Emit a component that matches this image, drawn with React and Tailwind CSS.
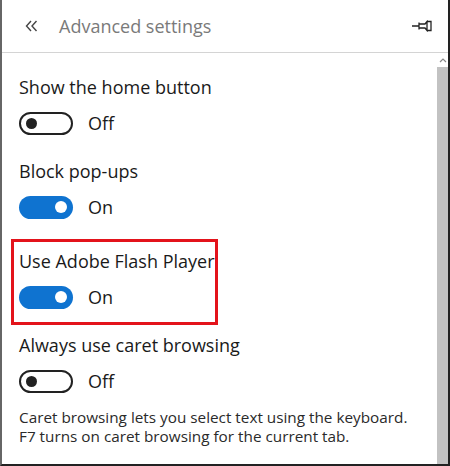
import React from "react";

function Toggle({ on }) {
  if (on) {
    return (
      <div className="w-[54px] h-[23px] rounded-full bg-[#0f73d0] flex items-center justify-end pr-[6px]">
        <div className="w-[12px] h-[12px] rounded-full bg-white" />
      </div>
    );
  }
  return (
    <div className="w-[54px] h-[23px] rounded-full border-[2px] border-[#222] flex items-center pl-[5px]">
      <div className="w-[11px] h-[11px] rounded-full bg-[#222]" />
    </div>
  );
}

function Setting({ label, on, className = "" }) {
  return (
    <div className={className}>
      <div className="text-[18px] leading-[24px] text-[#1a1a1a]">{label}</div>
      <div className="flex items-center mt-[12px]">
        <Toggle on={on} />
        <span className="ml-[15px] text-[18px] leading-[24px] text-[#1a1a1a]">{on ? "On" : "Off"}</span>
      </div>
    </div>
  );
}

export default function App() {
  return (
    <div
      className="w-[450px] h-[466px] bg-white flex flex-col border-l-[2px] border-l-[#666] border-r-[2px] border-r-[#222] border-b-[2px] border-b-[#222] overflow-hidden"
      style={{ fontFamily: '"Open Sans", "Noto Sans", sans-serif' }}
    >
      <div className="h-[53px] shrink-0 flex items-center border-b border-[#d4d4d4] pl-[23px] pr-[15px]">
        <svg width="13" height="12" viewBox="0 0 13 12" className="text-[#444]">
          <path d="M6 1 L1.5 6 L6 11 M11.5 1 L7 6 L11.5 11" fill="none" stroke="currentColor" strokeWidth="1.4" />
        </svg>
        <span className="ml-[21px] text-[18px] leading-[26px] text-[#7a7a7a]">Advanced settings</span>
        <div className="flex-1" />
        <svg width="21" height="12" viewBox="0 0 21 12" className="text-[#222]">
          <path d="M0 6 H7 M7 2.5 V9.5 M7 4 H13 L15 1.5 V10.5 L13 8 H7 M15 1.5 H19 V10.5 H15" fill="none" stroke="currentColor" strokeWidth="1.3" />
        </svg>
      </div>
      <div className="flex-1 flex min-h-0">
        <div className="flex-1 pl-[17px] pt-[22px]">
          <Setting label="Show the home button" on={false} />
          <Setting label="Block pop-ups" on={true} className="mt-[24px]" />
          <div className="mt-[20px] ml-[-8px] w-[207px] h-[86px] border-[3px] border-[#e3131b] pl-[5px] pt-[7px]">
            <Setting label="Use Adobe Flash Player" on={true} />
          </div>
          <Setting label="Always use caret browsing" on={false} className="mt-[8px]" />
          <div className="mt-[15px] text-[15.3px] leading-[19px] text-[#2a2a2a]">
            <div>Caret browsing lets you select text using the keyboard.</div>
            <div>F7 turns on caret browsing for the current tab.</div>
          </div>
        </div>
        <div className="w-[11px] flex flex-col shrink-0">
          <div className="h-[14px] flex items-center justify-center">
            <svg width="8" height="5" viewBox="0 0 8 5">
              <path d="M1 4 L4 1 L7 4" fill="none" stroke="#888" strokeWidth="1.2" />
            </svg>
          </div>
          <div className="flex-1 bg-[#c2c2c2]" />
        </div>
      </div>
    </div>
  );
}
